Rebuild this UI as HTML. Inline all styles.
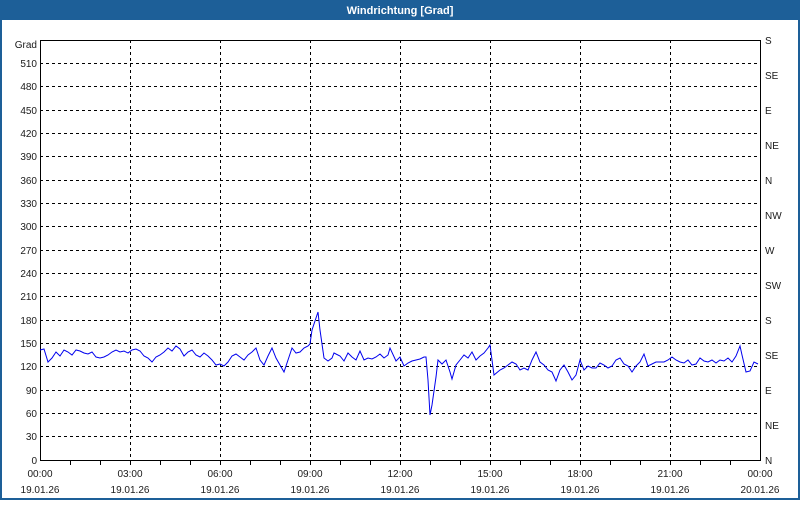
<!DOCTYPE html>
<html><head><style>
body{margin:0;width:800px;height:500px;overflow:hidden;background:#fff;font-family:"Liberation Sans",sans-serif}
</style></head><body>
<svg width="800" height="500" xmlns="http://www.w3.org/2000/svg" font-family="Liberation Sans, sans-serif" font-size="10" fill="#1a1a1a">
<rect x="0" y="0" width="800" height="500" fill="#fff"/>
<rect x="0" y="0" width="800" height="20" fill="#1d5f98"/>
<rect x="0" y="20" width="2" height="480" fill="#1d5f98"/>
<rect x="798" y="20" width="2" height="480" fill="#1d5f98"/>
<rect x="0" y="498" width="800" height="2" fill="#1d5f98"/>
<text x="400" y="14" text-anchor="middle" fill="#fff" font-weight="bold" font-size="11">Windrichtung [Grad]</text>
<g stroke="#000" stroke-dasharray="3,3" stroke-width="1">
<path d="M40 63.5H760M40 86.5H760M40 110.5H760M40 133.5H760M40 156.5H760M40 180.5H760M40 203.5H760M40 226.5H760M40 250.5H760M40 273.5H760M40 296.5H760M40 320.5H760M40 343.5H760M40 366.5H760M40 390.5H760M40 413.5H760M40 436.5H760"/>
<path d="M130.5 40V460M220.5 40V460M310.5 40V460M400.5 40V460M490.5 40V460M580.5 40V460M670.5 40V460"/>
</g>
<rect x="40.5" y="40.5" width="720" height="420" fill="none" stroke="#000"/>
<g stroke="#000"><path d="M70.5 460v5M100.5 460v5M130.5 460v5M160.5 460v5M190.5 460v5M220.5 460v5M250.5 460v5M280.5 460v5M310.5 460v5M340.5 460v5M370.5 460v5M400.5 460v5M430.5 460v5M460.5 460v5M490.5 460v5M520.5 460v5M550.5 460v5M580.5 460v5M610.5 460v5M640.5 460v5M670.5 460v5M700.5 460v5M730.5 460v5"/></g>
<polyline fill="none" stroke="#0000ee" stroke-width="1" points="40,350 44,349 48,362 52,358 56,352 60,356 64,350 68,352 72,355 76,350 80,351 84,353 88,354 92,352 96,357 100,358 104,357 108,355 112,352 116,350 120,352 124,351 128,353 132,350 136,349 140,351 144,356 148,358 152,362 156,357 160,355 164,352 168,348 172,351 176,346 180,349 184,356 188,352 192,350 196,355 200,357 204,353 208,356 212,360 216,365 220,364 224,366 228,362 232,356 236,354 240,357 244,360 248,355 252,352 256,348 260,360 264,365 268,356 272,348 276,358 280,365 284,372 288,360 292,348 296,353 300,352 304,348 308,346 310,344 312,330 318,312 320,330 324,358 328,361 332,358 334,353 340,356 344,361 348,353 352,357 356,360 360,351 364,360 368,358 372,359 376,357 380,354 384,358 388,355 390,348 396,361 400,357 404,366 408,363 412,361 416,360 420,359 424,357 426,357 428,380 430,415 432,405 436,377 438,360 442,364 446,360 450,372 452,379 456,365 460,360 464,355 468,358 472,352 476,360 480,356 484,353 488,348 490,345 494,375 500,370 504,368 508,365 512,362 516,364 520,370 524,368 528,370 532,360 536,352 540,362 544,365 548,370 552,372 556,381 560,370 564,365 568,372 572,380 576,375 580,360 584,370 588,366 592,368 596,368 600,363 604,365 608,368 612,366 616,360 620,358 624,364 628,366 632,372 636,366 640,362 644,354 648,366 652,364 656,362 660,362 664,362 668,360 672,357 676,360 680,362 684,363 688,360 692,365 696,364 700,358 704,361 708,362 712,360 716,363 720,360 724,361 728,358 732,362 736,356 740,346 742,355 746,372 750,371 754,362 758,364"/>
<g text-anchor="end">
<text x="37" y="48">Grad</text>
<text x="37" y="67">510</text><text x="37" y="90">480</text><text x="37" y="114">450</text><text x="37" y="137">420</text><text x="37" y="160">390</text><text x="37" y="184">360</text><text x="37" y="207">330</text><text x="37" y="230">300</text><text x="37" y="254">270</text><text x="37" y="277">240</text><text x="37" y="300">210</text><text x="37" y="324">180</text><text x="37" y="347">150</text><text x="37" y="370">120</text><text x="37" y="394">90</text><text x="37" y="417">60</text><text x="37" y="440">30</text><text x="37" y="464">0</text>
</g>
<g>
<text x="765" y="44">S</text><text x="765" y="79">SE</text><text x="765" y="114">E</text><text x="765" y="149">NE</text><text x="765" y="184">N</text><text x="765" y="219">NW</text><text x="765" y="254">W</text><text x="765" y="289">SW</text><text x="765" y="324">S</text><text x="765" y="359">SE</text><text x="765" y="394">E</text><text x="765" y="429">NE</text><text x="765" y="464">N</text>
</g>
<g text-anchor="middle">
<text x="40" y="477">00:00</text><text x="130" y="477">03:00</text><text x="220" y="477">06:00</text><text x="310" y="477">09:00</text><text x="400" y="477">12:00</text><text x="490" y="477">15:00</text><text x="580" y="477">18:00</text><text x="670" y="477">21:00</text><text x="760" y="477">00:00</text>
<text x="40" y="493">19.01.26</text><text x="130" y="493">19.01.26</text><text x="220" y="493">19.01.26</text><text x="310" y="493">19.01.26</text><text x="400" y="493">19.01.26</text><text x="490" y="493">19.01.26</text><text x="580" y="493">19.01.26</text><text x="670" y="493">19.01.26</text><text x="760" y="493">20.01.26</text>
</g>
</svg>
</body></html>
